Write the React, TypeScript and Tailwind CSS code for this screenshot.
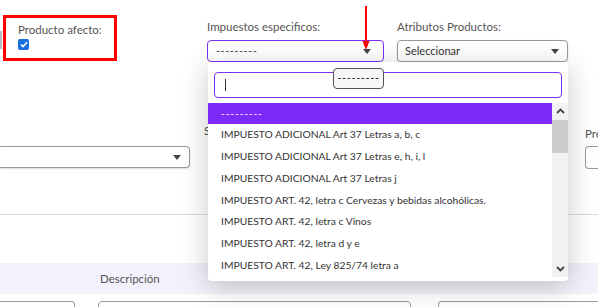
import React from "react";

const items = [
  "IMPUESTO ADICIONAL Art 37 Letras a, b, c",
  "IMPUESTO ADICIONAL Art 37 Letras e, h, i, l",
  "IMPUESTO ADICIONAL Art 37 Letras j",
  "IMPUESTO ART. 42, letra c Cervezas y bebidas alcohólicas.",
  "IMPUESTO ART. 42, letra c Vinos",
  "IMPUESTO ART. 42, letra d y e",
  "IMPUESTO ART. 42, Ley 825/74 letra a",
];

function Caret() {
  return (
    <svg width="8" height="5" viewBox="0 0 8 5" className="shrink-0">
      <path d="M0 0 L8 0 L4 5 Z" fill="#444" />
    </svg>
  );
}

export default function App() {
  return (
    <div
      className="relative w-[598px] h-[307px] overflow-hidden bg-white text-[11.5px] text-[#555]"
      style={{ fontFamily: "Lato, 'Noto Sans', sans-serif" }}
    >
      {/* fila 1 */}
      <div className="flex items-start pt-[15px]">
        <div className="w-[3px] h-[46px] flex items-center">
          <div className="w-[2px] h-[18px] bg-[#bbb] mt-[4px]" />
        </div>
        <div className="w-[114px] h-[46px] border-[3px] border-[#f00] pl-[12px] pt-[5px]">
          <div className="leading-[14px]">Producto afecto:</div>
          <div className="mt-[2px] w-[11px] h-[11px] rounded-[2px] bg-[#1a6fe0] flex items-center justify-center">
            <svg width="8" height="7" viewBox="0 0 8 7">
              <path d="M1 3.6 L3 5.6 L7 1.2" stroke="white" strokeWidth="1.6" fill="none" />
            </svg>
          </div>
        </div>
        <div className="ml-[90px] w-[177px] pt-[5px]">
          <div className="leading-[14px]">Impuestos especificos:</div>
          <div className="mt-[6px] h-[22px] border border-[#7b2ff7] rounded-[4px] flex items-center justify-between pl-[8px] pr-[12px] text-[#444] text-[11px]">
            <span className="tracking-[0.5px]">---------</span>
            <Caret />
          </div>
        </div>
        <div className="ml-[13px] w-[171px] pt-[5px]">
          <div className="leading-[14px]">Atributos Productos:</div>
          <div className="mt-[6px] h-[22px] border border-[#999] rounded-[4px] flex items-center justify-between pl-[7px] pr-[8px] text-[#333] text-[11px] shadow-[0_1px_2px_rgba(0,0,0,0.15)]">
            <span>Seleccionar</span>
            <Caret />
          </div>
        </div>
      </div>

      {/* fila 2 */}
      <div className="flex items-start mt-[62px]">
        <div className="w-[190px] mt-[22px] h-[22px] border border-[#999] border-l-0 rounded-r-[4px] flex items-center justify-end pr-[8px] shadow-[0_1px_2px_rgba(0,0,0,0.15)]">
          <Caret />
        </div>
        <div className="ml-[14px] leading-[14px]">S</div>
        <div className="ml-auto w-[13px] leading-[14px] pt-[3px]">
          <div className="whitespace-nowrap">Pre</div>
          <div className="mt-[5px] h-[23px] w-[20px] border border-[#999] rounded-l-[4px] border-r-0" />
        </div>
      </div>

      <div className="mt-[45px] border-t border-[#ddd]" />

      {/* cabecera tabla */}
      <div className="mt-[48px] h-[31px] bg-[#f3f1fb] flex items-center pl-[100px] text-[#555]">
        Descripción
      </div>
      <div className="mt-[7px] flex gap-[23px]">
        <div className="w-[75px] h-[12px] border border-[#999] border-l-0 rounded-tr-[4px]" />
        <div className="w-[313px] h-[12px] border border-[#999] rounded-t-[4px]" />
        <div className="ml-[4px] flex-1 h-[12px] border border-[#999] border-r-0 rounded-tl-[4px]" />
      </div>

      {/* flecha roja */}
      <svg className="absolute left-[361px] top-[5px]" width="10" height="46" viewBox="0 0 10 46">
        <line x1="5" y1="1" x2="5" y2="38" stroke="#f00" strokeWidth="2" />
        <path d="M1.5 36 L8.5 36 L5 45 Z" fill="#f00" />
      </svg>

      {/* desplegable */}
      <div className="absolute left-[208px] top-[62px] w-[360px] h-[219px] bg-white rounded-b-[4px] shadow-[0_6px_28px_rgba(0,0,0,0.22)] text-[10.3px]">
        <div className="px-[6px] pt-[10px]">
          <div className="h-[26px] border border-[#7b2ff7] rounded-[4px] flex items-center pl-[10px]">
            <div className="w-px h-[12px] bg-[#333]" />
          </div>
        </div>
        <div className="mt-[5px] flex">
          <div className="flex-1 text-[#333]">
            <div className="h-[21px] bg-[#7b2af9] text-white flex items-center pl-[13px] tracking-[0.8px]">---------</div>
            {items.map((t) => (
              <div key={t} className="h-[21.8px] flex items-center pl-[13px] whitespace-nowrap">
                {t}
              </div>
            ))}
          </div>
          <div className="w-[16px] h-[174px] bg-[#f1f1f1] flex flex-col items-center">
            <svg className="mt-[5px]" width="9" height="6" viewBox="0 0 9 6">
              <path d="M1 5 L4.5 1.5 L8 5" stroke="#444" strokeWidth="1.8" fill="none" />
            </svg>
            <div className="mt-[6px] w-full h-[33px] bg-[#cdcdcd]" />
            <svg className="mt-auto mb-[5px]" width="9" height="6" viewBox="0 0 9 6">
              <path d="M1 1 L4.5 4.5 L8 1" stroke="#444" strokeWidth="1.8" fill="none" />
            </svg>
          </div>
        </div>
      </div>

      {/* tooltip */}
      <div className="absolute left-[333px] top-[68px] w-[51px] h-[21px] bg-[#f7f7f7] border border-[#555] rounded-[4px] flex items-center justify-center text-[#222] text-[11px] tracking-[0.6px]">
        ---------
      </div>
    </div>
  );
}
